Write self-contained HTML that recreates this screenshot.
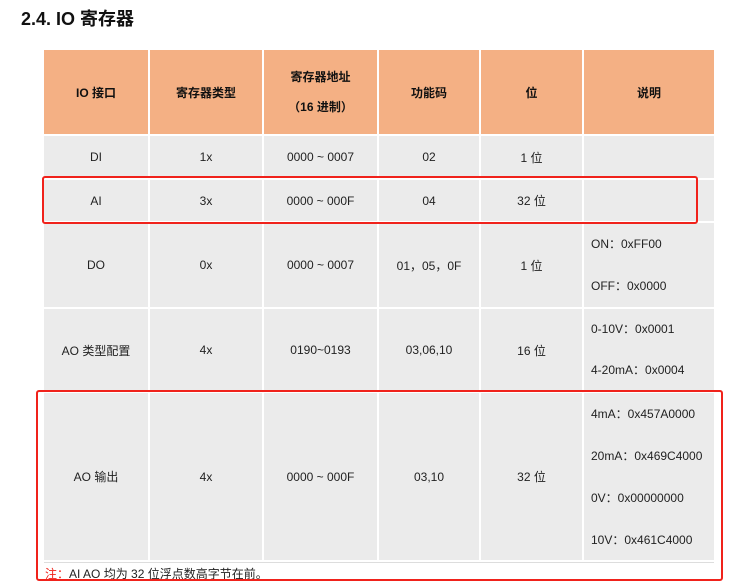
<!DOCTYPE html>
<html><head><meta charset="utf-8"><style>
body{margin:0;width:742px;height:585px;background:#fff;position:relative;overflow:hidden;font-family:"Liberation Sans","Noto Sans CJK SC",sans-serif;color:#222;}
.c{position:absolute;background:#ebebeb;display:flex;align-items:center;justify-content:center;font-size:12px;text-align:center;}
.h{background:#f4b084;font-weight:bold;color:#111;}
.l{display:block;text-align:left;padding-left:7px;box-sizing:border-box;}
.box{position:absolute;border:2.5px solid #f0221b;border-radius:3px;box-sizing:border-box;}
</style></head><body>
<div style="position:absolute;left:21px;top:5px;font-size:18px;font-weight:bold;color:#111;">2.4. IO 寄存器</div>

<div class="c h" style="left:44px;top:50px;width:104px;height:84px">IO 接口</div>
<div class="c h" style="left:150px;top:50px;width:112px;height:84px">寄存器类型</div>
<div class="c h" style="left:264px;top:50px;width:113px;height:84px;flex-direction:column;line-height:30px">寄存器地址<br>（16 进制）</div>
<div class="c h" style="left:379px;top:50px;width:100px;height:84px">功能码</div>
<div class="c h" style="left:481px;top:50px;width:101px;height:84px">位</div>
<div class="c h" style="left:584px;top:50px;width:130px;height:84px">说明</div>

<div class="c" style="left:44px;top:136px;width:104px;height:42px">DI</div>
<div class="c" style="left:150px;top:136px;width:112px;height:42px">1x</div>
<div class="c" style="left:264px;top:136px;width:113px;height:42px">0000 ~ 0007</div>
<div class="c" style="left:379px;top:136px;width:100px;height:42px">02</div>
<div class="c" style="left:481px;top:136px;width:101px;height:42px">1 位</div>
<div class="c" style="left:584px;top:136px;width:130px;height:42px"></div>

<div class="c" style="left:44px;top:180px;width:104px;height:41px">AI</div>
<div class="c" style="left:150px;top:180px;width:112px;height:41px">3x</div>
<div class="c" style="left:264px;top:180px;width:113px;height:41px">0000 ~ 000F</div>
<div class="c" style="left:379px;top:180px;width:100px;height:41px">04</div>
<div class="c" style="left:481px;top:180px;width:101px;height:41px">32 位</div>
<div class="c" style="left:584px;top:180px;width:130px;height:41px"></div>

<div class="c" style="left:44px;top:223px;width:104px;height:84px">DO</div>
<div class="c" style="left:150px;top:223px;width:112px;height:84px">0x</div>
<div class="c" style="left:264px;top:223px;width:113px;height:84px">0000 ~ 0007</div>
<div class="c" style="left:379px;top:223px;width:100px;height:84px">01，05，0F</div>
<div class="c" style="left:481px;top:223px;width:101px;height:84px">1 位</div>
<div class="c l" style="left:584px;top:223px;width:130px;height:84px;padding-top:0px;line-height:42px">ON：0xFF00<br>OFF：0x0000</div>

<div class="c" style="left:44px;top:309px;width:104px;height:82px">AO 类型配置</div>
<div class="c" style="left:150px;top:309px;width:112px;height:82px">4x</div>
<div class="c" style="left:264px;top:309px;width:113px;height:82px">0190~0193</div>
<div class="c" style="left:379px;top:309px;width:100px;height:82px">03,06,10</div>
<div class="c" style="left:481px;top:309px;width:101px;height:82px">16 位</div>
<div class="c l" style="left:584px;top:309px;width:130px;height:82px;line-height:41px">0-10V：0x0001<br>4-20mA：0x0004</div>

<div class="c" style="left:44px;top:393px;width:104px;height:167px">AO 输出</div>
<div class="c" style="left:150px;top:393px;width:112px;height:167px">4x</div>
<div class="c" style="left:264px;top:393px;width:113px;height:167px">0000 ~ 000F</div>
<div class="c" style="left:379px;top:393px;width:100px;height:167px">03,10</div>
<div class="c" style="left:481px;top:393px;width:101px;height:167px">32 位</div>
<div class="c l" style="left:584px;top:393px;width:130px;height:167px;line-height:42px">4mA：0x457A0000<br>20mA：0x469C4000<br>0V：0x00000000<br>10V：0x461C4000</div>

<div style="position:absolute;left:44px;top:562px;width:670px;height:1px;background:#ddd"></div>
<div style="position:absolute;left:45px;top:565px;font-size:12px;"><span style="color:#f0221b">注：</span>AI AO 均为 32 位浮点数高字节在前。</div>

<div class="box" style="left:42px;top:176px;width:656px;height:48px"></div>
<div class="box" style="left:36px;top:390px;width:687px;height:191px"></div>
</body></html>
